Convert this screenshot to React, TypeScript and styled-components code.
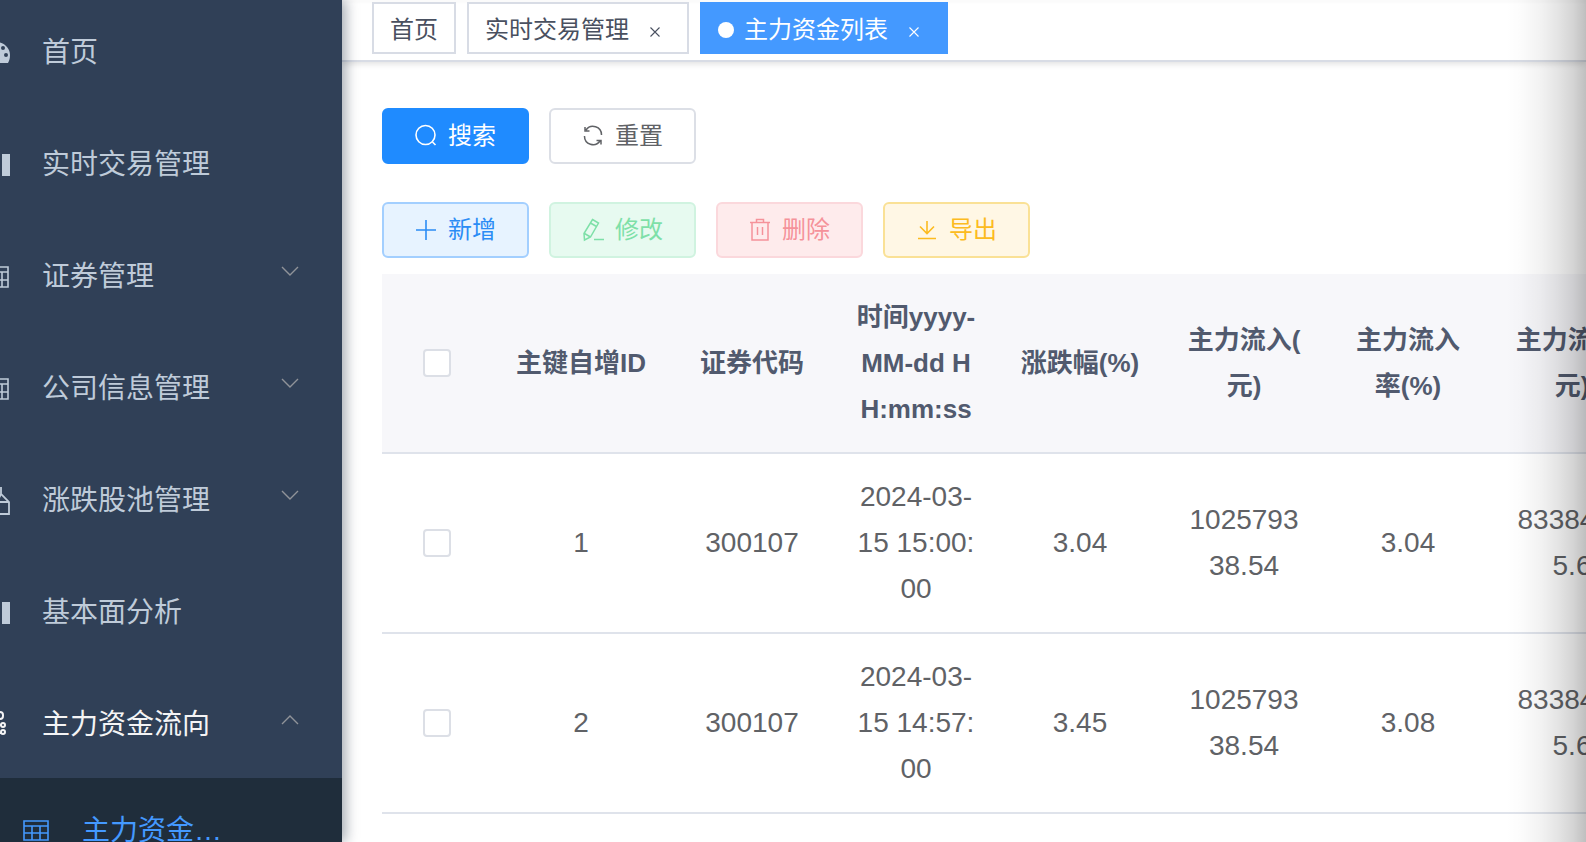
import React from 'react';
import styled, { createGlobalStyle, css } from 'styled-components';

const GlobalStyle = createGlobalStyle`
  * { box-sizing: border-box; }
  body {
    margin: 0;
    font-family: "Liberation Sans", "Noto Sans CJK SC", sans-serif;
    background: #fff;
    overflow: hidden;
  }
`;

const Page = styled.div`
  display: flex;
  height: 100vh;
  overflow: hidden;
  position: relative;
`;

const Sidebar = styled.nav`
  flex: 0 0 342px;
  background: #304057;
  overflow: hidden;
  box-shadow: 4px 0 12px rgba(0, 21, 41, 0.35);
  z-index: 2;
`;

const MenuList = styled.ul`
  list-style: none;
  margin: -6px 0 0 -18px;
  padding: 0;
`;

const MenuLink = styled.a<{ $open?: boolean }>`
  display: flex;
  align-items: center;
  gap: 32px;
  height: 112px;
  padding: 6px 42px 0 0;
  font-size: 28px;
  line-height: 40px;
  color: ${(p) => (p.$open ? '#f4f4f5' : '#bfcbd9')};
  text-decoration: none;
  white-space: nowrap;
`;

const MenuIcon = styled.svg`
  flex: none;
  width: 28px;
  height: 28px;
`;

const MenuText = styled.span`
  flex: 1;
`;

const Arrow = styled.svg`
  width: 20px;
  height: 20px;
  margin-bottom: 10px;
  color: #909399;
`;

const SubMenu = styled.ul`
  list-style: none;
  margin: 0;
  padding: 0;
  background: #1f2d3b;
`;

const SubLink = styled(MenuLink)`
  height: 100px;
  padding-left: 40px;
  color: #4499ff;
`;

const Main = styled.main`
  flex: 1;
  min-width: 0;
  overflow: hidden;
`;

const TabBar = styled.div`
  display: flex;
  gap: 11px;
  height: 62px;
  padding: 2px 30px 0;
  border-bottom: 2px solid #d8dce5;
  box-shadow: 0 2px 6px rgba(0, 0, 0, 0.12), inset 0 3px 3px rgba(0, 21, 41, 0.02);
`;

const Tab = styled.div<{ $active?: boolean }>`
  display: flex;
  align-items: center;
  height: 52px;
  padding: 4px 16px 0;
  border: 2px solid ${(p) => (p.$active ? '#4499ff' : '#d8dce5')};
  background: ${(p) => (p.$active ? '#4499ff' : '#fff')};
  color: ${(p) => (p.$active ? '#fff' : '#495060')};
  font-size: 24px;
  line-height: 36px;
  white-space: nowrap;
`;

const TabLink = styled.a`
  color: inherit;
  text-decoration: none;
`;

const Dot = styled.span`
  width: 16px;
  height: 16px;
  margin-right: 10px;
  border-radius: 50%;
  background: #fff;
`;

const CloseButton = styled.button`
  display: flex;
  align-items: center;
  justify-content: center;
  width: 32px;
  height: 32px;
  margin: 4px 0 0 10px;
  padding: 0;
  border: 0;
  background: none;
  color: inherit;
`;

const Content = styled.section`
  padding: 46px 0 0 40px;
`;

const ButtonRow = styled.div<{ $space: number }>`
  display: flex;
  gap: 20px;
  margin-bottom: ${(p) => p.$space}px;
`;

type Tone = 'primary' | 'default' | 'add' | 'edit' | 'remove' | 'export';

const tones: Record<Tone, [string, string, string]> = {
  primary: ['#1f8bff', '#1f8bff', '#fff'],
  default: ['#fff', '#dcdfe6', '#606266'],
  add: ['#e7f3ff', '#a3cfff', '#2b8cf5'],
  edit: ['#e7faf0', '#d0f3e0', '#7ee0a8'],
  remove: ['#feebec', '#fbd8dc', '#f5929a'],
  export: ['#fff7e5', '#fae196', '#fcbb20'],
};

const ActionButton = styled.button<{ $tone: Tone }>`
  display: inline-flex;
  align-items: center;
  gap: 10px;
  height: 56px;
  padding: 0 31px 0 30px;
  border: 2px solid;
  border-radius: 6px;
  font-family: inherit;
  font-size: 24px;
  line-height: 36px;
  white-space: nowrap;
  ${(p) => {
    const [bg, line, text] = tones[p.$tone];
    return css`
      background: ${bg};
      border-color: ${line};
      color: ${text};
    `;
  }}
`;

const ButtonIcon = styled.svg`
  width: 24px;
  height: 24px;
  fill: none;
  stroke: currentColor;
`;

const Table = styled.table`
  table-layout: fixed;
  width: 1272px;
  border-collapse: separate;
  border-spacing: 0;
`;

const Col = styled.col<{ $width: number }>`
  width: ${(p) => p.$width}px;
`;

const cell = css`
  height: 180px;
  padding: 20px;
  border-bottom: 2px solid #dfe3eb;
  line-height: 46px;
  text-align: center;
  vertical-align: middle;
  word-break: break-all;
`;

const Th = styled.th`
  ${cell}
  background: #f7f7fa;
  color: #515a6e;
  font-size: 26px;
  font-weight: 700;
`;

const Td = styled.td`
  ${cell}
  color: #606266;
  font-size: 28px;
`;

const Check = styled.input`
  display: block;
  appearance: none;
  width: 28px;
  height: 28px;
  margin: 0 auto;
  border: 2px solid #dcdfe6;
  border-radius: 4px;
  background: #fff;
`;

const EdgeShadow = styled.div`
  position: absolute;
  top: 0;
  right: 0;
  bottom: 0;
  width: 80px;
  z-index: 3;
  pointer-events: none;
  background: linear-gradient(
    to right,
    rgba(0, 0, 0, 0),
    rgba(0, 0, 0, 0.01) 18%,
    rgba(0, 0, 0, 0.05) 44%,
    rgba(0, 0, 0, 0.1) 64%,
    rgba(0, 0, 0, 0.17) 84%,
    rgba(0, 0, 0, 0.25)
  );
`;

const icons = {
  dashboard: (
    <path
      fill="currentColor"
      fillRule="evenodd"
      d="M14 3C6 3 0 9 0 16c0 4 1 6 2 8h24c1-2 2-4 2-8C28 9 22 3 14 3zM14 5a2 2 0 1 1 0 4 2 2 0 0 1 0-4zM21 7a2 2 0 1 1 0 4 2 2 0 0 1 0-4zM24 14a2 2 0 1 1 0 4 2 2 0 0 1 0-4z"
    />
  ),
  chart: <path fill="currentColor" d="M0 14h8v11H0zM10 9h8v16h-8zM20 3h8v22h-8z" />,
  form: <path fill="none" stroke="currentColor" strokeWidth="1.6" d="M1 4h25v20H1zM7 9h19M7 17h19M20 9v15M13 9v15" />,
  table: <path fill="none" stroke="currentColor" strokeWidth="1.6" d="M2 4h24v19H2zM2 9h24M2 16h24M10 9v14M18 9v14" />,
  shape: <path fill="none" stroke="currentColor" strokeWidth="1.8" d="M19 0v7l8 8v12H1V15h26M19 7l-4 8" />,
  tree: (
    <g fill="none" stroke="currentColor" strokeWidth="2">
      <rect x="14" y="1" width="7" height="7" rx="3" />
      <circle cx="21" cy="14" r="2" />
      <circle cx="21" cy="21" r="2" />
      <path d="M2 4h12M4 4v18h15M4 14h15" />
    </g>
  ),
};

type IconName = keyof typeof icons;

const menu: { label: string; icon: IconName; arrow?: boolean }[] = [
  { label: '首页', icon: 'dashboard' },
  { label: '实时交易管理', icon: 'chart' },
  { label: '证券管理', icon: 'form', arrow: true },
  { label: '公司信息管理', icon: 'form', arrow: true },
  { label: '涨跌股池管理', icon: 'shape', arrow: true },
  { label: '基本面分析', icon: 'chart' },
];

const headers = [
  '主键自增ID',
  '证券代码',
  '时间yyyy-MM-dd HH:mm:ss',
  '涨跌幅(%)',
  <>主力流入(<br />元)</>,
  '主力流入率(%)',
  <>主力流出(<br />元)</>,
];

const rows = [
  ['1', '300107', '2024-03-15 15:00:00', '3.04', '102579338.54', '3.04', '83384185.6'],
  ['2', '300107', '2024-03-15 14:57:00', '3.45', '102579338.54', '3.08', '83384185.6'],
];

function Icon({ name }: { name: IconName }) {
  return <MenuIcon viewBox="0 0 28 28" aria-hidden="true">{icons[name]}</MenuIcon>;
}

function Chevron({ up }: { up?: boolean }) {
  return (
    <Arrow viewBox="0 0 20 20" aria-hidden="true">
      <path d={up ? 'M2 14l8-8 8 8' : 'M2 5l8 8 8-8'} fill="none" stroke="currentColor" strokeWidth="1.4" />
    </Arrow>
  );
}

function Close({ label }: { label: string }) {
  return (
    <CloseButton type="button" aria-label={label}>
      <svg width="10" height="10" viewBox="0 0 10 10" aria-hidden="true">
        <path d="M.5.5l9 9M9.5.5l-9 9" stroke="currentColor" strokeWidth="1.1" />
      </svg>
    </CloseButton>
  );
}

export default function App() {
  return (
    <Page>
      <GlobalStyle />
      <Sidebar>
        <MenuList>
          {menu.map((m) => (
            <li key={m.label}>
              <MenuLink href="#">
                <Icon name={m.icon} />
                <MenuText>{m.label}</MenuText>
                {m.arrow && <Chevron />}
              </MenuLink>
            </li>
          ))}
          <li>
            <MenuLink href="#" $open>
              <Icon name="tree" />
              <MenuText>主力资金流向</MenuText>
              <Chevron up />
            </MenuLink>
            <SubMenu>
              <li>
                <SubLink href="#">
                  <Icon name="table" />
                  <MenuText>主力资金…</MenuText>
                </SubLink>
              </li>
            </SubMenu>
          </li>
        </MenuList>
      </Sidebar>
      <Main>
        <TabBar>
          <Tab><TabLink href="#">首页</TabLink></Tab>
          <Tab>
            <TabLink href="#">实时交易管理</TabLink>
            <Close label="关闭实时交易管理" />
          </Tab>
          <Tab $active>
            <Dot />
            <TabLink href="#">主力资金列表</TabLink>
            <Close label="关闭主力资金列表" />
          </Tab>
        </TabBar>
        <Content>
          <ButtonRow $space={38}>
            <ActionButton type="button" $tone="primary">
              <ButtonIcon viewBox="0 0 24 24" strokeWidth="1.6">
                <circle cx="11.5" cy="11" r="9.5" />
                <path d="M18.5 18l3 3" />
              </ButtonIcon>
              搜索
            </ActionButton>
            <ActionButton type="button" $tone="default">
              <ButtonIcon viewBox="0 0 24 24" strokeWidth="1.5">
                <path d="M5 6A8.500 8.500 0 0 1 20.500 11M4 3v4h4.500M19 17A8.500 8.500 0 0 1 3.500 12M20 20.500v-4h-4.500" />
              </ButtonIcon>
              重置
            </ActionButton>
          </ButtonRow>
          <ButtonRow $space={16}>
            <ActionButton type="button" $tone="add">
              <ButtonIcon viewBox="0 0 24 24" strokeWidth="1.6">
                <path d="M12 2v20M2 12h20" />
              </ButtonIcon>
              新增
            </ActionButton>
            <ActionButton type="button" $tone="edit" disabled>
              <ButtonIcon viewBox="0 0 24 24" strokeWidth="1.5">
                <path d="M11.500 1.500l6 3.500-8 14-6 3-.500-6.500zM9.500 5l6 3.500M3.500 15.500l6 3.500M13 21.500h10" />
              </ButtonIcon>
              修改
            </ActionButton>
            <ActionButton type="button" $tone="remove" disabled>
              <ButtonIcon viewBox="0 0 24 24" strokeWidth="1.5">
                <path d="M2 4.500h20M4 4.500V22h16V4.500M8.500 4.500v-3h7v3M9.500 9v8M14.500 9v8" />
              </ButtonIcon>
              删除
            </ActionButton>
            <ActionButton type="button" $tone="export">
              <ButtonIcon viewBox="0 0 24 24" strokeWidth="1.6">
                <path d="M12 3v12.500M5 8.500l7 7 7-7M3 20.500h18" />
              </ButtonIcon>
              导出
            </ActionButton>
          </ButtonRow>
          <Table>
            <colgroup>
              <Col $width={110} />
              <Col $width={178} />
              {headers.slice(1).map((_, i) => <Col key={i} $width={164} />)}
            </colgroup>
            <thead>
              <tr>
                <Th><Check type="checkbox" aria-label="全选" /></Th>
                {headers.map((h, i) => <Th key={i} scope="col">{h}</Th>)}
              </tr>
            </thead>
            <tbody>
              {rows.map((r) => (
                <tr key={r[0]}>
                  <Td><Check type="checkbox" aria-label={`选择 ${r[0]}`} /></Td>
                  {r.map((v, i) => <Td key={i}>{v}</Td>)}
                </tr>
              ))}
            </tbody>
          </Table>
        </Content>
      </Main>
      <EdgeShadow />
    </Page>
  );
}
